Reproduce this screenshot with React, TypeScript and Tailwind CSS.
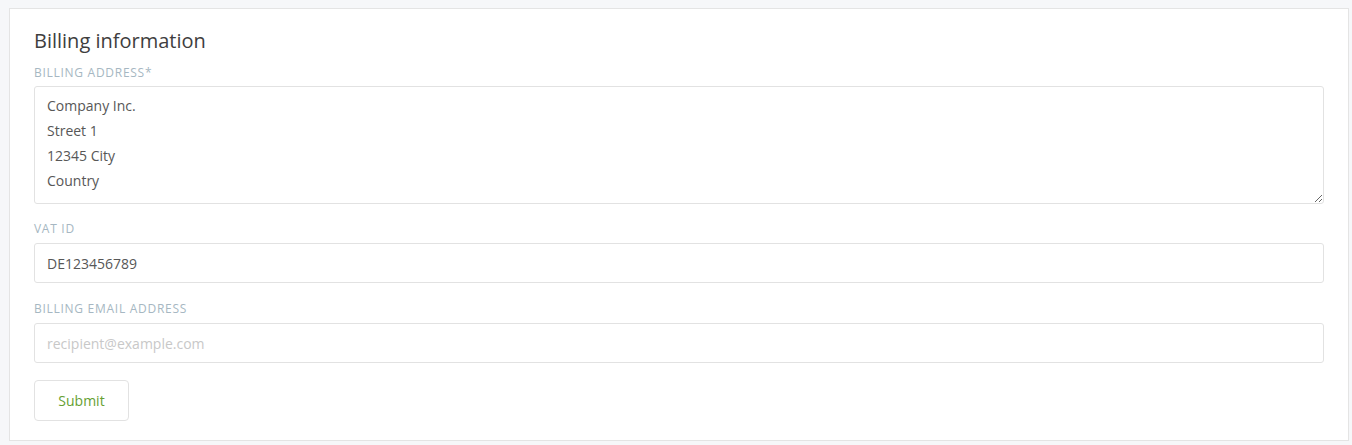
export default function App() {
  return (
    <div className="min-h-[445px] bg-[#f6f7f9] pt-2 pl-[9px] pr-1 pb-1" style={{ fontFamily: '"Open Sans", "Noto Sans", sans-serif' }}>
      <div className="flex h-[433px] w-[1340px] flex-col border border-[#e4e4e4] bg-white px-6 pt-[19px]">
        <h2 className="text-[20px] leading-[26px] text-[#3e3e3e]">Billing information</h2>
        <label className="mt-[11px] text-[12px] uppercase leading-4 tracking-[0.06em] text-[#a6b7c2]">Billing address*</label>
        <textarea
          className="mt-[5px] h-[118px] w-full resize-y rounded-[3px] border border-[#e2e2e2] px-3 pt-[6px] text-[14px] leading-[25px] text-[#575757] outline-none"
          defaultValue={'Company Inc.\nStreet 1\n12345 City\nCountry'}
        />
        <label className="mt-[17px] text-[12px] uppercase leading-4 tracking-[0.06em] text-[#a6b7c2]">VAT ID</label>
        <input
          className="mt-[6px] h-10 w-full rounded-[3px] border border-[#e2e2e2] px-3 text-[14px] text-[#575757] outline-none"
          defaultValue="DE123456789"
        />
        <label className="mt-[18px] text-[12px] uppercase leading-4 tracking-[0.06em] text-[#a6b7c2]">Billing email address</label>
        <input
          className="mt-[6px] h-10 w-full rounded-[3px] border border-[#e2e2e2] px-3 text-[14px] text-[#575757] outline-none placeholder:text-[#c8c8c8]"
          placeholder="recipient@example.com"
        />
        <div className="mt-[17px]">
          <button className="h-[41px] w-[95px] rounded-[4px] border border-[#e2e2e2] bg-white text-[14px] text-[#66a032]">Submit</button>
        </div>
      </div>
    </div>
  )
}
